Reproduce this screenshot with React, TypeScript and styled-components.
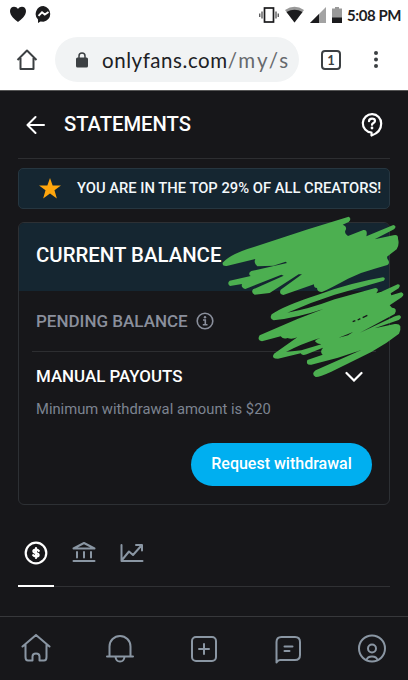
import React from 'react';
import styled, { createGlobalStyle } from 'styled-components';

const Global = createGlobalStyle`
  * { box-sizing: border-box; }
  body { margin: 0; background: #17171a; font-family: Roboto, "Liberation Sans", sans-serif; }
  svg { display: block; flex: none; }
`;

const Screen = styled.div`
  width: 408px;
  height: 680px;
  display: flex;
  flex-direction: column;
  overflow: hidden;
  background: #17171a;
`;

const StatusBar = styled.div`
  height: 29px;
  flex: none;
  display: flex;
  align-items: center;
  background: #fff;
  padding: 0 7px 0 10px;
`;

const StatusGroup = styled.div<{ $gap: number }>`
  display: flex;
  align-items: center;
  gap: ${(p) => p.$gap}px;
`;

const Spacer = styled.div`
  flex: 1;
`;

const Clock = styled.span`
  margin-left: 5px;
  font: 700 15px/20px Lato, sans-serif;
  letter-spacing: -0.45px;
  color: #1d1d1f;
  white-space: nowrap;
`;

const BrowserBar = styled.div`
  height: 62px;
  flex: none;
  display: flex;
  align-items: center;
  background: #fff;
  border-bottom: 1px solid #555;
  padding: 0 30px 0 16px;
`;

const AddressPill = styled.div`
  width: 244px;
  height: 45px;
  margin-left: 17px;
  display: flex;
  align-items: center;
  padding: 0 10px 0 21px;
  border-radius: 23px;
  background: #f1f3f4;
`;

const Url = styled.div`
  margin: 1px 0 0 14px;
  width: 186px;
  flex: none;
  overflow: hidden;
  white-space: nowrap;
  font: 400 20.5px/28px Lato, sans-serif;
  letter-spacing: 0.55px;
  color: #202124;
`;

const UrlPath = styled.span`
  color: #66696d;
  letter-spacing: 2px;
`;

const TabCount = styled.div`
  width: 20px;
  height: 20px;
  margin: 0 33px 0 22px;
  display: grid;
  place-items: center;
  border: 2px solid #3c4043;
  border-radius: 4px;
  font: 700 13px/16px Lato, sans-serif;
  color: #3c4043;
`;

const Page = styled.main`
  flex: 1;
  padding: 0 18px;
`;

const Header = styled.header`
  height: 68px;
  display: flex;
  align-items: center;
  border-bottom: 1px solid #2d2e31;
  padding: 0 7px 1px 8px;
`;

const Title = styled.h1`
  margin: 0 auto 0 18px;
  font-size: 20.2px;
  line-height: 24px;
  font-weight: 500;
  color: #fefefe;
`;

const Banner = styled.div`
  height: 41px;
  margin-top: 9px;
  display: flex;
  align-items: center;
  gap: 16px;
  padding: 0 0 1px 20px;
  border: 1px solid #263640;
  border-radius: 5px;
  background: #152631;
  color: #f3f8fb;
  font-size: 14.75px;
  font-weight: 500;
  white-space: nowrap;
`;

const Card = styled.section`
  position: relative;
  height: 283px;
  margin-top: 13px;
  border: 1px solid #2d3034;
  border-radius: 6px;
`;

const CardHead = styled.div`
  height: 68px;
  display: flex;
  align-items: center;
  padding: 0 17px 4px;
  border-radius: 5px 5px 0 0;
  background: #152631;
  color: #fefefe;
  font-size: 20.4px;
  font-weight: 500;
`;

const PendingRow = styled.div`
  height: 61px;
  margin: 0 13px;
  padding: 0 4px;
  display: flex;
  align-items: center;
  gap: 8px;
  border-bottom: 1px solid #2d2e31;
  color: #8a8f9c;
  font-size: 17px;
  font-weight: 500;
`;

const PayoutRow = styled.div`
  height: 48px;
  padding: 0 26px 1px 17px;
  display: flex;
  align-items: center;
  justify-content: space-between;
  color: #fefefe;
  font-size: 16.9px;
  font-weight: 500;
`;

const Note = styled.p`
  margin: 0 17px;
  font-size: 14.75px;
  line-height: 18px;
  color: #7d8491;
`;

const Withdraw = styled.button`
  display: block;
  width: 181px;
  height: 43px;
  margin: 25px 17px 0 auto;
  padding: 0 0 2px;
  border: 0;
  border-radius: 22px;
  background: #00aff0;
  color: #fff;
  font: 500 16px/20px Roboto, sans-serif;
`;

const Scribble = styled.svg`
  position: absolute;
  left: 199px;
  top: -11px;
  pointer-events: none;
`;

const Tabs = styled.div`
  height: 57px;
  margin-top: 25px;
  display: flex;
  gap: 12px;
  border-bottom: 1px solid #303134;
`;

const Tab = styled.div<{ $active?: boolean }>`
  width: 36px;
  height: 57px;
  display: flex;
  justify-content: center;
  padding-top: 11px;
  color: ${(p) => (p.$active ? '#fff' : '#8a96a3')};
  border-bottom: ${(p) => (p.$active ? '2px solid #fff' : '0')};
`;

const BottomNav = styled.nav`
  height: 64px;
  flex: none;
  display: flex;
  align-items: center;
  justify-content: space-between;
  padding: 1px 21px 0;
  border-top: 1px solid #37383b;
  color: #8a96a3;
`;

const Icon = ({ size = 30, w = 2, children }: { size?: number; w?: number; children: React.ReactNode }) => (
  <svg width={size} height={size} viewBox={`0 0 ${size} ${size}`} fill="none" stroke="currentColor" strokeWidth={w} strokeLinecap="round" strokeLinejoin="round">
    {children}
  </svg>
);

export default function App() {
  return (
    <Screen>
      <Global />
      <StatusBar>
        <StatusGroup $gap={9}>
          <svg width="16" height="17" viewBox="0 0 16 17"><path d="M8 16C5 13.500 0 10 0 5C0 0 6-.5 8 3C10-.5 16 0 16 5C16 10 11 13.500 8 16Z" fill="#1b1b1d" /></svg>
          <svg width="17" height="17" viewBox="0 0 17 17"><path d="M8.500 0A8 8 0 0 1 8.500 15.800L5.500 15.500L3 17V13.600A8 8 0 0 1 8.500 0Z" fill="#1b1b1d" /><path d="M3.500 9.800L7 6.300L9.800 8.600L13.500 6" fill="none" stroke="#fff" strokeWidth="1.900" /></svg>
        </StatusGroup>
        <Spacer />
        <StatusGroup $gap={6}>
          <svg width="20" height="18" viewBox="0 0 20 18" fill="none" stroke="#1b1b1d"><rect x="5.500" y="2" width="9" height="14" strokeWidth="1.700" /><path d="M3 5.500V12.500M17 5.500V12.500M.8 7.500V11M19.200 7.500V11" strokeWidth="1" /></svg>
          <svg width="19" height="18" viewBox="0 0 19 18"><path d="M0 4Q9.500-2.500 19 4L9.500 16.500Z" fill="#999" /><path d="M1.500 6Q9.500 1.500 17.500 6L9.500 16.500Z" fill="#1b1b1d" /></svg>
          <svg width="16" height="16" viewBox="0 0 16 16"><path d="M0 16L16 0V16Z" fill="#a3a3a3" /><path d="M0 16L9 7V16Z" fill="#1b1b1d" /></svg>
          <svg width="10" height="16" viewBox="0 0 10 16"><path d="M0 1.500H3V0H7V1.500H10V16H0Z" fill="#999" /><path d="M0 10.500H10V16H0Z" fill="#1b1b1d" /></svg>
        </StatusGroup>
        <Clock>5:08 PM</Clock>
      </StatusBar>
      <BrowserBar>
        <svg width="22" height="22" viewBox="0 0 22 22" fill="none" stroke="#3c4043" strokeWidth="2" strokeLinejoin="round"><path d="M1.500 11L11 1.500L20.500 11M4.500 9V20H17.500V9" /></svg>
        <AddressPill>
          <svg width="12" height="16" viewBox="0 0 12 16"><path d="M3 6V4A3 3 0 0 1 9 4V6" fill="none" stroke="#3c4043" strokeWidth="1.500" /><rect y="5.500" width="12" height="10" rx="1.500" fill="#3c4043" /></svg>
          <Url>onlyfans.com<UrlPath>/my/s</UrlPath></Url>
        </AddressPill>
        <TabCount>1</TabCount>
        <svg width="4" height="20" viewBox="0 0 4 20" fill="#3c4043"><circle cx="2" cy="3" r="2" /><circle cx="2" cy="9.500" r="2" /><circle cx="2" cy="16" r="2" /></svg>
      </BrowserBar>
      <Page>
        <Header>
          <svg width="20" height="20" viewBox="0 0 20 20" fill="none" stroke="#fff" strokeWidth="2" strokeLinecap="round" strokeLinejoin="round"><path d="M18 11H2M9.500 3L1.500 11L9.500 19" /></svg>
          <Title>STATEMENTS</Title>
          <svg width="22" height="26" viewBox="0 0 22 26" fill="none" stroke="#fff" strokeWidth="2.200" strokeLinejoin="round"><path d="M10.500 24.500V21.500A9.200 9.200 0 1 1 20.200 12.500C20.200 18 16.500 22.500 10.500 24.500Z" /><path d="M8 10.200C8.100 6.700 14 6.900 14 10C14 12 11 12 11 13.800" strokeLinecap="round" /><circle cx="11" cy="17" r="1.400" fill="#fff" stroke="none" /></svg>
        </Header>
        <Banner>
          <svg width="22" height="21" viewBox="0 0 24 23"><path d="M12 0L14.900 8.200H24L16.900 13.500L19.500 22.500L12 17L4.500 22.500L7.100 13.500L0 8.200H9.100Z" fill="#ffa60d" /></svg>
          YOU ARE IN THE TOP 29% OF ALL CREATORS!
        </Banner>
        <Card>
          <CardHead>CURRENT BALANCE</CardHead>
          <PendingRow>
            PENDING BALANCE
            <svg width="18" height="18" viewBox="0 0 18 18" fill="none" stroke="currentColor" strokeWidth="1.600"><circle cx="9" cy="9" r="7.800" /><path d="M7 8H9.300V12.500M6.800 12.700H11.500" /><circle cx="9" cy="5.200" r="1.200" fill="currentColor" stroke="none" /></svg>
          </PendingRow>
          <PayoutRow>
            MANUAL PAYOUTS
            <svg width="18" height="12" viewBox="0 0 18 12" fill="none" stroke="#fff" strokeWidth="2.200" strokeLinecap="round"><path d="M1.500 3L9 10.500L16.500 3" /></svg>
          </PayoutRow>
          <Note>Minimum withdrawal amount is $20</Note>
          <Withdraw>Request withdrawal</Withdraw>
          <Scribble width="190" height="170" viewBox="0 0 570 510" fill="#4caf50">
            <path d="M14 152Q12 163 26 162L112 141Q106 153 118 163L166 161L203 149L207 153L100 177Q88 184 98 192L35 206Q26 214 36 222L72 216Q68 227 82 231L190 188L197 191L105 232Q98 242 110 248L155 243L242 187L252 187L188 233Q182 246 196 249L288 217Q287 227 297 228Q297 240 312 240Q335 230 390 200Q430 180 470 170L508 159Q518 153 508 140L507 134L536 112Q545 98 540 80Q541 66 526 70L470 82L528 52Q538 42 526 39L445 73Q450 52 436 54L390 72Q376 64 384 52Q386 42 374 38L392 30Q402 20 392 14L270 52L110 104Q40 124 14 152Z" />
            <path fillRule="evenodd" d="M495 196Q400 212 300 248Q195 282 161 307Q153 320 167 325Q235 318 316 291L240 320L125 370Q115 384 132 388L188 373Q196 383 208 378Q222 383 238 376L168 425Q158 440 180 440L248 424Q252 432 266 427L315 407Q304 420 314 428L268 444Q262 460 280 458L360 437L430 414L293 475Q278 486 293 495Q303 496 340 479L460 420Q505 395 543 365Q549 355 547 343Q544 334 530 336L470 349L542 324Q554 316 545 310Q538 308 520 318L426 362L530 306Q540 288 522 287L515 280L551 256Q562 246 550 241L520 250L518 244L542 229Q550 217 539 217L490 239L475 244Q486 230 472 228Q400 248 350 262Q270 292 208 302Q280 270 350 248L497 206Q505 199 495 196ZM204 420Q245 397 308 377Q288 384 292 389Q298 396 310 397L250 415ZM362 377L405 360L390 370Z" />
            <path d="M404 329L412 326M419 324L427 320M434 317L448 310" stroke="#17171a" strokeWidth="4" fill="none" />
          </Scribble>
        </Card>
        <Tabs>
          <Tab $active><Icon size={24} w={2.2}><circle cx="12" cy="12" r="10.300" /><path d="M14.800 9.800Q14 8.500 12 8.500C8.500 8.500 8.500 11.500 12 12C15.500 12.500 15.500 15.500 12 15.500Q10 15.500 9.200 14.200M12 7V17" /></Icon></Tab>
          <Tab><Icon size={24} w={2}><path d="M1.500 7.500L12 2L22.500 7.500ZM5 11V16.500M12 11V16.500M19 11V16.500M1.500 20H22.500" /></Icon></Tab>
          <Tab><Icon size={24} w={2}><path d="M1.500 4V20H22.500M2 19L9 10.500L13 14L21.500 4.500M16 4H22V9.500" /></Icon></Tab>
        </Tabs>
      </Page>
      <BottomNav>
        <Icon><path d="M1.500 12.500L15 1L28.500 12.500M4.500 10V23Q4.500 26.500 7 26.500H11.500V22.500Q11.500 19.500 15 19.500Q18.500 19.500 18.500 22.500V26.500H23Q25.500 26.500 25.500 23V10" /></Icon>
        <Icon><path d="M2 22.500H28M4.500 22V12.500A10.500 10.500 0 0 1 25.500 12.500V22M10.500 23Q11 27.500 15 27.500Q19 27.500 19.500 23" /></Icon>
        <Icon><rect x="3" y="3" width="24" height="24" rx="4" /><path d="M15 10V20M10 15H20" /></Icon>
        <Icon><path d="M3.500 28.500V8Q3.500 3 8.500 3H22Q27 3 27 8V21Q27 26 22 26H7Q5 26 3.500 28.500M11.500 12.500H19.500M11.500 17H16.500" /></Icon>
        <Icon><circle cx="15" cy="14.500" r="13" /><circle cx="15" cy="14.500" r="4" /><path d="M9.500 26Q10.500 22.500 15 22.500Q19.500 22.500 20.500 26" /></Icon>
      </BottomNav>
    </Screen>
  );
}
